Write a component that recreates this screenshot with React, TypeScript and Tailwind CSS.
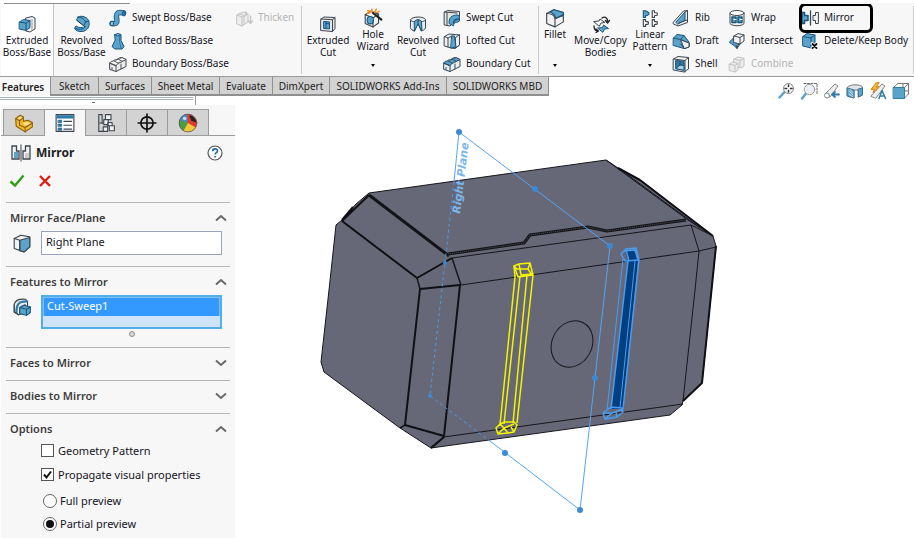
import { useState, type ReactNode } from "react";
import clsx from "clsx";

const BLUE = "#5ba3cb";
const DEEP = "#2e7ba8";
const INK = "#3c4650";

function Icon({ size = 18, children }: { size?: number; children: ReactNode }) {
  return (
    <svg
      width={size}
      height={size}
      viewBox="0 0 18 18"
      fill="none"
      stroke={INK}
      strokeWidth="1"
      strokeLinejoin="round"
      strokeLinecap="round"
      className="shrink-0"
      aria-hidden="true"
    >
      {children}
    </svg>
  );
}

const ExtrudeIcon = () => (
  <Icon>
    <path d="M8 3l6-1.500 3 1.500v11l-5 3-4-1z" fill="#f4f4f4" />
    <path d="M14 4.500v11" stroke="#999" />
    <path d="M1.500 7l4-2.500 6.500 1v7l-4 3-6.500-1.500z" fill={BLUE} stroke="#17557c" />
    <path d="M1.500 7l6.500 1.200v7.300M8 8.200l4-2.700" stroke="#17557c" />
  </Icon>
);
const RevolveIcon = () => (
  <Icon>
    <path
      d="M5 2c4-2 10 0 11 5 1 5-2 9-7 9.500-3 .3-6-.5-7.500-3l1.500-2.500c3 2 6 2 7.500.5L4 5.500z"
      fill={BLUE}
      stroke="#17557c"
    />
    <path d="M5 2c4 .5 6.500 2 7.500 5l-2 4.500M12.500 7l3.500-1M2 13c3 2 8 2 10.500-1.500" stroke="#17557c" />
    <path d="M4 6.500l7 5-7-2z" fill="#fff" stroke="#fff" strokeWidth="1.200" />
    <path d="M4 5.500l7.500 6" stroke="#222" />
  </Icon>
);
const SweepIcon = () => (
  <Icon>
    <path d="M3 14.500c6 1 5-2 4.500-6S9 2.500 14.500 4" stroke="#17557c" strokeWidth="5.500" />
    <path d="M3 14.500c6 1 5-2 4.500-6S9 2.500 14.500 4" stroke={BLUE} strokeWidth="3.800" />
    <ellipse cx="15" cy="4.500" rx="1.500" ry="2.500" fill={DEEP} stroke="#17557c" />
    <ellipse cx="3" cy="14.500" rx="1.500" ry="2.300" fill="#a6d3ea" stroke="#17557c" />
  </Icon>
);
const LoftIcon = () => (
  <Icon>
    <path d="M6 2.500h6v6l3 6-2 2.500H6L3 14.500l3-6z" fill={BLUE} stroke="#17557c" />
    <path d="M6 2.500l3-1 3 1-3 1.200z" fill="#9bcce5" stroke="#17557c" />
    <path d="M10.500 3.500v6l1.500 7" stroke={DEEP} />
  </Icon>
);
const BoundaryIcon = ({ blue = false }: { blue?: boolean }) => (
  <Icon>
    <path d="M1 8l11-5.500 5 2v7l-10 5-6-2z" fill="#ececec" />
    <path
      d="M1 8c1-3 3-1 4-2.500s3 .5 4-1.500 3 0 4-1.500l4 2c-1 2-3 .5-4 2s-3 0-3.500 1.500S7.500 9 7 10.500z"
      fill={blue ? BLUE : "#fafafa"}
    />
    <path d="M7 10.500v6M1 8l6 2.500M5 6l5 2.500M9 4l4.500 2.500M3 12.500v2M12 9v5" stroke={blue ? "#17557c" : "#555"} />
  </Icon>
);
const ThickenIcon = () => (
  <Icon>
    <g stroke="#c4c4c4">
      <path d="M2 6l6-3 5 2v8l-6 4-5-2z" fill="#ededed" />
      <path d="M2 6l5 2v9M7 8l6-3M4 4.500l5 2v9" />
      <path d="M11 3v3M15.500 7v7M13.500 12l2 2.500 2-2.500" strokeWidth="1.400" />
    </g>
  </Icon>
);
const ExtrudeCutIcon = () => (
  <Icon>
    <path d="M2 4l3-2 11 .5v11l-2.500 3L2 15.500z" fill="#e9e9e9" />
    <path d="M2 4l11.500.7v12M13.500 4.700L16 2.500" />
    <path d="M5 6.500l5.500.4v7L5 13.500z" fill={BLUE} stroke="#17557c" />
    <path d="M7 8.500l3.500.3M7 6.700v6.800" stroke="#17557c" />
  </Icon>
);
const HoleIcon = () => (
  <Icon size={20}>
    <path d="M2 6l5-3 7 2.500v8L9 17l-7-3z" fill="#f2f2f2" />
    <path d="M2 6l7 3v8M9 9l5-3.500" />
    <ellipse cx="6.500" cy="11" rx="2.800" ry="3.300" fill={BLUE} stroke="#17557c" />
    <path d="M9 4.500l7.500 6" stroke="#222" strokeWidth="2" />
    <path d="M4 2.500l3 .5M8 1v2.500M12 1l-1.500 3M14.500 3l-2 1M4 5l2.500-1" stroke="#f08a1c" strokeWidth="1.300" />
  </Icon>
);
const RevolveCutIcon = () => (
  <Icon>
    <path d="M1.500 5c0-4 15-4 15 0v8c-1 2-2.500 2.500-4.500 3L9 8l-3.500 8c-2-.5-3.500-1.500-4-3z" fill="#ececec" />
    <path d="M5.500 6.500C7 4 11 4 12.500 6.500L13 16 9 9l-3.500 7z" fill={BLUE} stroke="#17557c" />
    <path d="M9 5v4M1.500 5c1 1.500 2.500 2 4 1.500M12.500 6.500c1.500.3 3-.3 4-1.500" />
  </Icon>
);
const SweptCutIcon = () => (
  <Icon>
    <path d="M1.500 3l3-1.500 12 1v5L7 17l-5.500-1z" fill="#e5e5e5" />
    <path d="M1.500 3L14 4M4 3.500v12.500" />
    <path d="M6 14c0-5 2-8 9-8l1.500 2v4l-3 1.500c-2 0-3 1-3 3z" fill={BLUE} stroke="#17557c" />
    <path d="M10.500 14c0-2 1-3.500 5-4" stroke="#17557c" strokeWidth="1.500" />
  </Icon>
);
const LoftedCutIcon = () => (
  <Icon>
    <path d="M1.500 4.500L6 2l10.500 1v10L12 16.500l-4-.5-6.500-2z" fill="#efefef" />
    <path d="M1.500 4.500L5 6v9M5 6l4-2M12.500 6v10l4-3V3z" />
    <path d="M9 4h2.500L13 15l-5 1z" fill={BLUE} stroke="#17557c" />
  </Icon>
);
const FilletIcon = () => (
  <Icon size={20}>
    <path d="M1.500 5L8 1.500l8.500 2.500v8.500L9 17l-7.500-3z" fill="#f2f2f2" />
    <path d="M4.500 3.500L8 1.500l8.500 2.500v3L9.500 9C9 6 7 4.500 4.500 3.500z" fill={BLUE} stroke="#17557c" />
    <path d="M1.500 5c4 0 7 1 7.500 5v7M9 10l7-4" />
  </Icon>
);
const MoveIcon = () => (
  <Icon>
    <path d="M2 6.500l5-.5 1-2 5 3.500-4 .5-1.500 3z" fill="#f8f8f8" />
    <path d="M6 13l4.500-.5 1-2.500 5 3.500-4 .5-1.500 3z" fill={BLUE} stroke="#17557c" />
    <path d="M10 3c3-2 6 0 5.500 4M13.500 5.500l2 2.500 2-2.500M2 11c0 3 1 5 4 5M4 14l2.500 2L4 17.500" stroke="#222" strokeWidth="1.300" />
  </Icon>
);
const PatternIcon = () => (
  <Icon size={20}>
    <path d="M3 2.500h2l2 1 1 1v1L7 6.500 5 7v1.500H3z" fill={BLUE} stroke="#17557c" />
    <path d="M11 2.500h2V4l2.500.5v2L13 7v1.500h-2zM3 10.500h2V12l2.500.5v2L5 15v1.500H3zM11 10.500h2V12l2.500.5v2L13 15v1.500h-2z" />
  </Icon>
);
const RibIcon = () => (
  <Icon>
    <path d="M1.500 13l10-11 4-.5v12L6 17l-4.500-2z" fill="#ededed" />
    <path d="M4 13L13 3v8l-7 4z" fill={BLUE} stroke="#17557c" />
    <path d="M7 14l8-3M13 3l2.500-1.500" />
  </Icon>
);
const DraftIcon = () => (
  <Icon>
    <path d="M1.500 6L5 2.500l7 1L17 10v5l-5 1.500-10.500-3z" fill={BLUE} stroke="#17557c" />
    <path d="M1.500 6l7 1.500 8.500 3.500v4l-4.500 1.500-4-4.500M8.500 7.500L12 3.500" stroke="#17557c" />
    <path d="M9 8l8 3v4l-4.500 1.500z" fill="#efefef" />
  </Icon>
);
const ShellIcon = () => (
  <Icon>
    <path d="M1.500 4L6 1.500l10.500 1V14L12 17l-10.500-2z" fill="#f2f2f2" />
    <path d="M4 5.500l8 .8V15l-8-1.500z" fill={DEEP} stroke="#17557c" />
    <path d="M4 13.500l4-3.500 4 .5V15z" fill="#a6d3ea" stroke="#17557c" />
    <path d="M8 6v4M1.500 4L13 5.500V17M13 5.500l3.500-3" />
  </Icon>
);
const WrapIcon = () => (
  <Icon>
    <path d="M2 4.500v10c2 3 12 3 14 0v-10" fill="#f0f0f0" />
    <ellipse cx="9" cy="4" rx="7" ry="2.500" fill="#fff" />
    <path d="M4 8h4v5.500H4zM10 8h4v5.500h-4z" fill={BLUE} stroke="#17557c" strokeWidth="1.500" />
    <path d="M6 10.500h2M12 10.500h2" stroke="#fff" />
  </Icon>
);
const IntersectIcon = () => (
  <Icon>
    <path d="M1.500 10L5 6.500l10 1.500-5 5-1 3.500-3-3z" fill={BLUE} stroke="#17557c" />
    <path d="M6 4l4-2.500 6 1.500v6L12 12l-6-1.500z" fill="#f4f4f4" />
    <path d="M6 4l6 1.500V12M12 5.500L16 3M8 13l1 3.500L12 12" />
  </Icon>
);
const CombineIcon = () => (
  <Icon>
    <g stroke="#c4c4c4" fill="#ececec">
      <path d="M6 4l4-2 6 1.500V11l-3 2-7-2z" />
      <path d="M6 4l6 1.500V12M12 5.500l4-2" />
      <path d="M1.500 9L5 7l5 1.500V15l-3 2-5.500-1.500z" />
      <path d="M1.500 9L7 10.500V17M7 10.500l3-2" />
    </g>
  </Icon>
);
const MirrorIcon = ({ panel = false }: { panel?: boolean }) =>
  panel ? (
    <svg width="22" height="20" viewBox="0 0 22 20" fill="none" stroke={INK} strokeWidth="1.300" aria-hidden="true">
      <path d="M2 3v13h7V8H6.500V3zM20 3v13h-7V8h2.500V3z" fill="#f4f4f4" />
      <path d="M4 9h4v6H4z" fill={BLUE} stroke="none" />
      <path d="M15 10h4v5h-4z" fill="#ccc" stroke="none" />
      <path d="M11 1.500v17" stroke="#666" />
    </svg>
  ) : (
    <Icon>
      <path d="M1 3.500h2.500v3H7v5H3.500v3H1z" fill={BLUE} stroke="#17557c" strokeWidth="1.500" />
      <path d="M9.500 2v14" strokeWidth="1.300" />
      <path d="M17 3.500h-2.500v3H12v5h2.500v3H17z" fill="#f4f4f4" />
    </Icon>
  );
const DeleteIcon = () => (
  <Icon>
    <path d="M2 4.500L6 1.500l8 1.500v9l-4 4-8-2z" fill={BLUE} stroke="#17557c" />
    <path d="M2 4.500l8 1.500v10M10 6l4-3" stroke="#17557c" />
    <path d="M11 11.500l4.500 4.500M15.500 11.500L11 16" stroke="#fff" strokeWidth="3" />
    <path d="M11.500 12l4 4M15.500 12l-4 4" stroke="#111" strokeWidth="1.800" />
  </Icon>
);
const FaceIcon = () => (
  <Icon size={20}>
    <path d="M2 5l6-3 8 1.500v9L11 17l-9-3z" fill="#f2f2f2" />
    <path d="M7 6.500L16 4v8.500L11 17l-4-1z" fill={BLUE} />
    <path d="M2 5l5 1.500V16" />
  </Icon>
);
const FeatureIcon = () => (
  <Icon size={20}>
    <path d="M2 6.500C3 3 6 1.500 12 2l2 2v9l-8 3-4-2.500z" fill="#ededed" />
    <path d="M4 14c0-7 1.500-10 9-10" stroke={DEEP} strokeWidth="2" />
    <path d="M7 14c0-4 0-6 5-7M2 7v6.500L6 16" />
    <path d="M7 9.500l4-2 5.500 1.500v5L13 16.500 7 15z" fill={BLUE} stroke="#17557c" />
    <path d="M7 9.500l6 1.500v5.500M13 11l3.500-2" stroke="#17557c" />
  </Icon>
);

type Tool = { label: string; icon: ReactNode; disabled?: boolean; boxed?: boolean };

function ToolColumn({ tools, className }: { tools: Tool[]; className: string }) {
  return (
    <div className={clsx("flex shrink-0 flex-col pt-[2px]", className)}>
      {tools.map((t) => (
        <div key={t.label} className="relative flex h-[23px] items-center">
          <button
            type="button"
            disabled={t.disabled}
            className={clsx("flex items-center gap-[5px] whitespace-nowrap", t.disabled && "text-[#b4b4b4]")}
          >
            {t.icon}
            {t.label}
          </button>
          {t.boxed && (
            <span className="pointer-events-none absolute -top-[3px] -left-[2px] h-[30px] w-[74px] rounded-md border-3 border-black" />
          )}
        </div>
      ))}
    </div>
  );
}

function BigTool({
  lines,
  icon,
  className,
  active,
  arrow,
  high,
}: {
  lines: string[];
  icon: ReactNode;
  className: string;
  active?: boolean;
  arrow?: boolean;
  high?: boolean;
}) {
  return (
    <button
      type="button"
      className={clsx(
        "flex shrink-0 flex-col items-center text-center leading-3 whitespace-nowrap",
        high ? "pt-1" : "pt-[10px]",
        active && "border-r border-[#c4c4c4] bg-white",
        className,
      )}
    >
      <span className="flex h-5 items-center">{icon}</span>
      {lines.map((l) => (
        <span key={l}>{l}</span>
      ))}
      {arrow && (
        <span className="mt-auto mb-[9px] border-x-2 border-t-3 border-x-transparent border-t-black" />
      )}
    </button>
  );
}

const Divider = ({ className }: { className: string }) => (
  <div className={clsx("my-[2px] w-px shrink-0 bg-[#cccccc]", className)} />
);

function Ribbon() {
  return (
    <div className="flex h-[73px] overflow-hidden border-b border-[#9b9b9b] bg-[#f7f7f7] pl-px text-[10px] text-[#15151f]">
      <BigTool active className="w-[53px]" lines={["Extruded", "Boss/Base"]} icon={<ExtrudeIcon />} />
      <BigTool className="w-[55px]" lines={["Revolved", "Boss/Base"]} icon={<RevolveIcon />} />
      <ToolColumn
        className="w-[126px]"
        tools={[
          { label: "Swept Boss/Base", icon: <SweepIcon /> },
          { label: "Lofted Boss/Base", icon: <LoftIcon /> },
          { label: "Boundary Boss/Base", icon: <BoundaryIcon /> },
        ]}
      />
      <ToolColumn className="w-[66px]" tools={[{ label: "Thicken", icon: <ThickenIcon />, disabled: true }]} />
      <Divider className="mr-px" />
      <BigTool className="w-[50px]" lines={["Extruded", "Cut"]} icon={<ExtrudeCutIcon />} />
      <BigTool high arrow className="w-[40px]" lines={["Hole", "Wizard"]} icon={<HoleIcon />} />
      <BigTool className="w-[50px]" lines={["Revolved", "Cut"]} icon={<RevolveCutIcon />} />
      <ToolColumn
        className="w-[95px]"
        tools={[
          { label: "Swept Cut", icon: <SweptCutIcon /> },
          { label: "Lofted Cut", icon: <LoftedCutIcon /> },
          { label: "Boundary Cut", icon: <BoundaryIcon blue /> },
        ]}
      />
      <Divider className="mr-px" />
      <BigTool high arrow className="w-[30px]" lines={["Fillet"]} icon={<FilletIcon />} />
      <BigTool className="w-[61px]" lines={["Move/Copy", "Bodies"]} icon={<MoveIcon />} />
      <BigTool high arrow className="w-[38px]" lines={["Linear", "Pattern"]} icon={<PatternIcon />} />
      <ToolColumn
        className="ml-[3px] w-[56px]"
        tools={[
          { label: "Rib", icon: <RibIcon /> },
          { label: "Draft", icon: <DraftIcon /> },
          { label: "Shell", icon: <ShellIcon /> },
        ]}
      />
      <ToolColumn
        className="w-[73px]"
        tools={[
          { label: "Wrap", icon: <WrapIcon /> },
          { label: "Intersect", icon: <IntersectIcon /> },
          { label: "Combine", icon: <CombineIcon />, disabled: true },
        ]}
      />
      <ToolColumn
        className="w-[111px]"
        tools={[
          { label: "Mirror", icon: <MirrorIcon />, boxed: true },
          { label: "Delete/Keep Body", icon: <DeleteIcon /> },
        ]}
      />
      <Divider className="ml-auto" />
    </div>
  );
}

const TABS = [
  { label: "Features", w: "w-[51px]" },
  { label: "Sketch", w: "w-[48px]" },
  { label: "Surfaces", w: "w-[53px]" },
  { label: "Sheet Metal", w: "w-[68px]" },
  { label: "Evaluate", w: "w-[53px]" },
  { label: "DimXpert", w: "w-[57px]" },
  { label: "SOLIDWORKS Add-Ins", w: "w-[117px]" },
  { label: "SOLIDWORKS MBD", w: "w-[102px]" },
];

function ViewTools() {
  return (
    <div className="ml-auto flex items-center gap-[5px] pr-1">
      <button type="button" aria-label="Zoom to fit">
        <Icon>
          <path d="M2.500 15.500l4.500-5" stroke={BLUE} strokeWidth="2.500" />
          <circle cx="11.500" cy="6.500" r="5" fill="#f4f6f8" stroke="#888" />
          <path d="M11.500 3v1.500M11.500 8.500V10M8 6.500h1.500M13.500 6.500H15" stroke="#333" strokeWidth="1.500" />
        </Icon>
      </button>
      <button type="button" aria-label="Zoom to area">
        <Icon>
          <path d="M4 1.500h13v11" stroke="#666" strokeDasharray="2 1.500" />
          <path d="M2 16.500l4-5" stroke={BLUE} strokeWidth="2.500" />
          <circle cx="9.500" cy="7.500" r="5.200" fill="#e9eff4" stroke="#999" />
        </Icon>
      </button>
      <button type="button" aria-label="Previous view">
        <Icon>
          <path d="M2 12L12 2l3 2-8 11z" fill="#eee" stroke="#888" />
          <circle cx="4" cy="13.500" r="2.500" fill="#fff" stroke="#888" />
          <path d="M16 12.500H9.500M12 10l-3 2.500 3 2.500" stroke={DEEP} strokeWidth="1.800" />
        </Icon>
      </button>
      <button type="button" aria-label="Section view">
        <Icon>
          <path d="M1.500 5c3-3 12-3 15 0v8l-4 2V8H8v8l-6.500-2z" fill="#e2e6ea" stroke="#777" />
          <path d="M1.500 6L8 8v8l-6.500-2zM12.500 7l4-1v7l-4 2z" fill={BLUE} stroke="#356f92" />
          <path d="M3 9l4 4M3 12l4 3M4 7.500l3 3" stroke="#d0e8f5" />
        </Icon>
      </button>
      <button type="button" aria-label="Dynamic annotation views">
        <Icon>
          <path d="M2 14L13 2l3 2-9 12z" fill="#eee" stroke="#888" />
          <path d="M7 1L2 7.500l3.500-.5L4 11l6-6.500L7 5l3-4z" fill="#f9c22f" stroke="#d77a12" />
          <path d="M10 16.500l3-8 3.500 8M11 14h4.500" stroke={DEEP} strokeWidth="1.500" />
        </Icon>
      </button>
      <button type="button" aria-label="View orientation">
        <Icon>
          <path d="M6 1.500h10.500V12M6 1.500L1.500 5.500M16.500 1.500l-4 4M11 1.500v4M12.500 9h4M16.500 12l-4 4" stroke="#777" />
          <path d="M1.500 5.500h11v11h-11z" fill={BLUE} stroke={DEEP} />
        </Icon>
      </button>
    </div>
  );
}

function PanelTabs() {
  const tab = "flex h-[27px] w-[41px] items-center justify-center border-r border-[#9b9b9b]";
  const idle = "border-b border-t bg-[#d3d3d3]";
  return (
    <div className="flex pt-1" role="tablist" aria-label="Managers">
      <div className="w-[3px] border-r border-b border-[#9b9b9b]" />
      <button type="button" role="tab" aria-label="Feature tree" className={clsx(tab, idle)}>
        <Icon size={20}>
          <path d="M1.500 5l4-3 3 1.500v4l4-1 4 2v4L10 17l-8-5z" fill="#f0b92e" stroke="#8a6010" />
          <path d="M1.500 5l3.500 2v4l5 2 6.500-4M10 13v4M5 7l3.500-3" fill="none" stroke="#8a6010" />
          <path d="M3 4.700l2.500-1.500 2 1-2 1.500zM8 9l4-1 3 1.500-5 2z" fill="#ffe389" stroke="none" />
        </Icon>
      </button>
      <button type="button" role="tab" aria-selected aria-label="Property manager" className={clsx(tab, "border-t bg-[#f7f7f7]")}>
        <Icon size={20}>
          <path d="M1 1.500h16v15H1z" fill="#fff" />
          <path d="M1.500 2h15v3h-15z" fill={DEEP} stroke="none" />
          <path d="M3 6.500h3v2H3zM3 10h3v2H3zM3 13.500h3v2H3z" fill={DEEP} stroke="#17557c" strokeWidth=".6" />
          <path d="M8 7.500h7M8 11h7M8 14.500h7" />
        </Icon>
      </button>
      <button type="button" role="tab" aria-label="Configurations" className={clsx(tab, idle)}>
        <Icon size={20}>
          <path d="M2.500 1.500v15M2.500 1.500h3M2.500 16.500h4M2.500 9h4M5.500 1.500v8" />
          <path d="M8.500 1.500h5v4.500h-5zM7 6h4v4.500H7zM6.500 12.500h4v4h-4zM12 11.500h4.500V16H12zM10.500 8.500h4v3h-4z" fill="#f2f2f2" />
        </Icon>
      </button>
      <button type="button" role="tab" aria-label="Dimensions" className={clsx(tab, idle)}>
        <Icon size={20}>
          <circle cx="9" cy="9" r="5.500" stroke="#111" strokeWidth="1.500" />
          <path d="M9 1v16M1 9h16" stroke="#111" strokeWidth="1.500" />
        </Icon>
      </button>
      <button type="button" role="tab" aria-label="Appearances" className={clsx(tab, idle)}>
        <Icon size={20}>
          <g stroke="none">
            <circle cx="9" cy="9" r="8" fill="#e5382a" />
            <path d="M9 9L1.500 6.500A8 8 0 0 1 8 1z" fill="#3d8fc6" />
            <path d="M9 9L1.300 6.500A8 8 0 0 0 5 15.900z" fill="#47a044" />
            <path d="M9 9l-4 7a8 8 0 0 0 11-3z" fill="#f4c93a" />
            <path d="M10 2c3 0 6 3 6.500 6.500L12 7z" fill="#222" />
            <circle cx="6" cy="5" r="1.600" fill="#fff" opacity=".7" />
          </g>
          <circle cx="9" cy="9" r="8" stroke="#555" strokeWidth=".7" />
        </Icon>
      </button>
      <div className="flex-1 border-b border-[#9b9b9b]" />
    </div>
  );
}

function Section({ title, open, className, children }: { title: string; open?: boolean; className?: string; children?: ReactNode }) {
  return (
    <section className={clsx("mr-[5px] ml-[5px] border-t border-[#b5b5b5]", className)}>
      <h2>
        <button
          type="button"
          aria-expanded={!!open}
          className="flex h-7 w-full items-center justify-between pt-[2px] pr-[3px] pl-1 text-[11px] font-semibold text-[#3d3d3d]"
        >
          {title}
          <svg width="12" height="8" viewBox="0 0 12 8" fill="none" stroke="#6a6a6a" strokeWidth="2" aria-hidden="true">
            <path d={open ? "M1 6.500l5-4.500 5 4.500" : "M1 1.500L6 6l5-4.500"} />
          </svg>
        </button>
      </h2>
      {children}
    </section>
  );
}

function PropertyPanel() {
  const [plane, setPlane] = useState("Right Plane");
  const [geometry, setGeometry] = useState(false);
  const [visual, setVisual] = useState(true);
  const [preview, setPreview] = useState("partial");

  const checks = [
    { id: "geo", label: "Geometry Pattern", on: geometry, set: setGeometry },
    { id: "vis", label: "Propagate visual properties", on: visual, set: setVisual },
  ];
  const radios = [
    { id: "full", label: "Full preview" },
    { id: "partial", label: "Partial preview" },
  ];

  return (
    <aside className="ml-px w-[234px] shrink-0 bg-[#f7f7f7] text-[11px] text-[#15151f]">
      <PanelTabs />
      <div className="flex h-[34px] items-center pr-3 pl-[9px]">
        <MirrorIcon panel />
        <h1 className="ml-1 text-[12px] font-bold text-[#222]">Mirror</h1>
        <button type="button" aria-label="Help" className="ml-auto">
          <svg width="16" height="16" viewBox="0 0 16 16" fill="none" aria-hidden="true">
            <circle cx="8" cy="8" r="7" stroke="#555" strokeWidth="1.200" fill="#fff" />
            <path d="M5.700 6.200c0-3.200 4.800-3 4.800-.3 0 1.800-2.300 1.700-2.300 3.600M8.200 11v1.500" stroke="#1d6d9e" strokeWidth="1.700" />
          </svg>
        </button>
      </div>
      <div className="flex h-[32px] items-start gap-[13px] pt-[4px] pl-2">
        <button type="button" aria-label="OK">
          <svg width="16" height="14" viewBox="0 0 16 14" fill="none" stroke="#2f9e12" strokeWidth="2.400" aria-hidden="true">
            <path d="M1.500 7.500L6 11.500l8.500-10" />
          </svg>
        </button>
        <button type="button" aria-label="Cancel">
          <svg width="14" height="14" viewBox="0 0 14 14" fill="none" stroke="#dc1d12" strokeWidth="2.400" aria-hidden="true">
            <path d="M2 2l10 10M12 2L2 12" />
          </svg>
        </button>
      </div>

      <Section title="Mirror Face/Plane" open className="h-16">
        <div className="flex items-center gap-[9px] pl-[6px]">
          <FaceIcon />
          <input
            aria-label="Mirror face or plane"
            value={plane}
            onChange={(e) => setPlane(e.target.value)}
            className="h-6 w-[181px] border border-[#9aa3bd] bg-white px-1 pb-1 outline-none"
          />
        </div>
      </Section>

      <Section title="Features to Mirror" open className="h-[81px]">
        <div className="flex items-start gap-[9px] pl-[6px]">
          <span className="pt-[2px]">
            <FeatureIcon />
          </span>
          <div className="flex flex-col items-center">
            <ul role="listbox" aria-label="Features to mirror" className="h-[34px] w-[181px] border-2 border-[#52aee8] bg-[#cfe4f9]">
              <li role="option" aria-selected className="h-[19px] border border-b-0 border-[#7fc0f5] bg-[#3399ff] pl-[3px] leading-4 text-white">
                Cut-Sweep1
              </li>
            </ul>
            <span className="mt-[2px] size-[6px] rounded-full border border-[#8d8d8d] bg-[#d8d8d8]" />
          </div>
        </div>
      </Section>

      <Section title="Faces to Mirror" className="h-[33px]" />
      <Section title="Bodies to Mirror" className="h-[33px]" />

      <Section title="Options" open>
        <div className="flex flex-col pt-px pl-[35px]">
          {checks.map((c) => (
            <label key={c.id} className="flex h-6 items-start gap-1 leading-4">
              <span className="mt-px grid">
                <input
                  type="checkbox"
                  checked={c.on}
                  onChange={(e) => c.set(e.target.checked)}
                  className="col-start-1 row-start-1 size-[13px] appearance-none border border-[#555] bg-white"
                />
                {c.on && (
                  <svg viewBox="0 0 13 13" className="pointer-events-none col-start-1 row-start-1 size-[13px]" fill="none" stroke="#111" strokeWidth="2" aria-hidden="true">
                    <path d="M3 6.500l2.500 3L10 3.500" />
                  </svg>
                )}
              </span>
              {c.label}
            </label>
          ))}
          <div role="radiogroup" aria-label="Preview" className="flex flex-col gap-[7px] pt-[2px] pb-[5px] pl-[2px]">
            {radios.map((r) => (
              <label key={r.id} className="flex items-center gap-[3px] leading-4">
                <span className="grid place-items-center">
                  <input
                    type="radio"
                    name="preview"
                    checked={preview === r.id}
                    onChange={() => setPreview(r.id)}
                    className="col-start-1 row-start-1 size-[14px] appearance-none rounded-full border border-[#666] bg-white"
                  />
                  {preview === r.id && <span className="pointer-events-none col-start-1 row-start-1 size-2 rounded-full bg-[#111]" />}
                </span>
                {r.label}
              </label>
            ))}
          </div>
        </div>
      </Section>
    </aside>
  );
}

const HANDLES = [
  [459, 132],
  [535, 189],
  [610, 246],
  [595, 378],
  [580, 510],
  [505, 453],
];

function ModelView() {
  return (
    <svg viewBox="235 105 679 433" className="h-auto w-full" fill="none" strokeLinejoin="round" role="img" aria-label="Model with mirror preview">
      <path
        d="M369 193L606 160L618 168L640 180L713 236L716 246L702 383L683 401L682 405L670 415L431 448L400 428L324 372L321 362L329 290L336 225L342 220L356 204Z"
        fill="#666878"
        stroke="#16161c"
      />
      <g stroke="#16161c">
        <path d="M461 285L699 251L716 247M691 225L699 251L695 290L683 401M452 258L691 225L713 236M444 437L683 404" />
        <path d="M400 428L405 425M444 437L431 448M452 258L461 285M417 278L420 289" strokeWidth="1.500" />
        <path d="M606 160L688 220L713 236M624 172L700 228" />
        <ellipse cx="572" cy="344" rx="20" ry="24" transform="rotate(28 572 344)" />
      </g>
      <g stroke="#101014" strokeWidth="2">
        <path d="M420 289L460 285L444 436L405 425ZM342 221L417 278L452 258M431 448L444 437" />
        <path d="M342 221L369 195M353 207L342 220M640 180L713 236M618 168L640 180M716 246L702 383L683 401" />
      </g>
      <g stroke="#141418" strokeWidth="3">
        <path d="M369 195L449 256M448 254L524 243L530 235L588 227L607 231L686 220" />
      </g>
      <path d="M448 254L524 243L530 235L588 227L607 231L686 220" stroke="#4b4c57" strokeWidth="1" strokeDasharray="1 1" />

      <g stroke="#f4f400" strokeWidth="1.500">
        <path d="M514 266L519 264L530 263L533 275L518 277ZM519 264L521 275L532 274M514 266L517 269L528 269L530 263M528 269L532 275" />
        <path d="M515 277L500 425M520 276L504 424M527 275L513 423M533 275L517 423M514 266L515 277" />
        <path d="M496 428L500 424L505 422L514 422L517 425L514 432L508 433L498 434ZM500 424L504 428L514 424M504 428L498 434M504 428L508 433M511 427L514 432" />
      </g>

      <path d="M628 261L638 260L623 409L611 409Z" fill="#003f80" />
      <path d="M625 251L635 250L638 260L628 261Z" fill="#003f80" />
      <g stroke="#4a9cf0" strokeWidth="1.500">
        <path d="M621 254L626 249L636 248L639 260L625 261ZM621 254L624 251L635 250L638 260M626 250L629 261" />
        <path d="M623 259L607 410" strokeWidth="1" />
        <path d="M628 261L611 409M639 260L623 409" />
        <path d="M635 261L620 408" strokeWidth="1" />
        <path d="M603 413L611 407L622 408L623 412L617 417L605 419ZM603 413L612 413L623 409M612 413L605 419M616 412L617 417" />
      </g>

      <g stroke="#55a5f5">
        <path d="M454 182L459 132L610 246L580 510L490 441" />
        <path d="M454 182L430 396L490 441" stroke="#4b9ce8" strokeDasharray="3 3" />
      </g>
      <g fill="#3c8ad6">
        {HANDLES.map(([x, y]) => (
          <circle key={`${x}-${y}`} cx={x} cy={y} r="3" />
        ))}
        <circle cx="445" cy="263" r="2" />
        <circle cx="430" cy="396" r="2" />
      </g>
      <text
        transform="translate(460 214) rotate(-83)"
        className="font-['DejaVu_Sans','Noto_Sans',sans-serif] text-[11px] font-bold italic"
        fill="#7ab6ea"
      >
        Right Plane
      </text>
    </svg>
  );
}

export default function App() {
  return (
    <div className="min-h-screen bg-white font-['Noto_Sans','Open_Sans',sans-serif]">
      <header>
        <div className="h-[3px]" />
        <div className="bg-[#f7f7f7]">
          <div className="ml-1 h-px w-[126px] bg-[#8c8c8c]" />
          <Ribbon />
        </div>
        <div className="flex h-[28px]">
          <div>
            <nav className="flex h-[19px] text-[10px] text-[#222]" role="tablist" aria-label="Command manager">
              {TABS.map((t, i) => (
                <button
                  key={t.label}
                  type="button"
                  role="tab"
                  aria-selected={i === 0}
                  className={clsx(
                    "shrink-0 border-r border-[#8f8f8f] text-center leading-4 whitespace-nowrap",
                    t.w,
                    i === 0 ? "bg-[#f7f7f7] pr-1 font-semibold" : "border-b-2 bg-[#d2d2d2]",
                  )}
                >
                  {t.label}
                </button>
              ))}
            </nav>
            <div className="flex h-[9px] w-[196px] flex-col items-start border-r border-[#9b9b9b] pt-px">
              <div className="h-[3px] w-[193px] border-y border-[#a9b4b8]" />
              <div className="mt-[2px] ml-[92px] h-px w-[3px] bg-[#777]" />
            </div>
          </div>
          <ViewTools />
        </div>
      </header>
      <main className="flex items-stretch">
        <PropertyPanel />
        <div className="min-w-0 flex-1">
          <ModelView />
        </div>
      </main>
    </div>
  );
}
